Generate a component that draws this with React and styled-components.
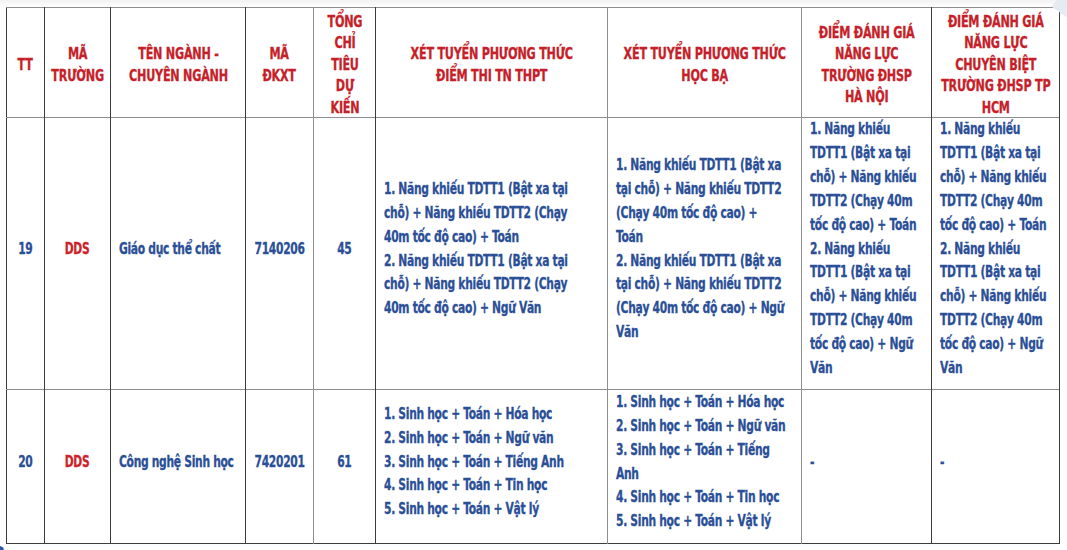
import styled, { createGlobalStyle } from "styled-components";

const GlobalStyle = createGlobalStyle`
  html, body {
    margin: 0;
    padding: 0;
    background: #ffffff;
  }
  body {
    font-family: "DejaVu Sans Condensed", "DejaVu Sans", "Liberation Sans", sans-serif;
  }
`;

const DARK = "#3c3c3c";
const GRAY = "#8e8e8e";

const columns = [
  { width: 38, line: DARK },
  { width: 66, line: DARK },
  { width: 135, line: DARK },
  { width: 68, line: GRAY },
  { width: 62, line: DARK },
  { width: 232, line: GRAY },
  { width: 194, line: GRAY },
  { width: 130, line: DARK },
  { width: 128, line: DARK },
];

const headers = [
  ["TT"],
  ["MÃ", "TRƯỜNG"],
  ["TÊN NGÀNH -", "CHUYÊN NGÀNH"],
  ["MÃ", "ĐKXT"],
  ["TỔNG", "CHỈ", "TIÊU", "DỰ", "KIẾN"],
  ["XÉT TUYỂN PHƯƠNG THỨC", "ĐIỂM THI TN THPT"],
  ["XÉT TUYỂN PHƯƠNG THỨC", "HỌC BẠ"],
  ["ĐIỂM ĐÁNH GIÁ", "NĂNG LỰC", "TRƯỜNG ĐHSP", "HÀ NỘI"],
  ["ĐIỂM ĐÁNH GIÁ", "NĂNG LỰC", "CHUYÊN BIỆT", "TRƯỜNG ĐHSP TP", "HCM"],
];

const talent = (last) => [
  "1. Năng khiếu",
  "TDTT1 (Bật xa tại",
  "chỗ) + Năng khiếu",
  "TDTT2 (Chạy 40m",
  "tốc độ cao) + Toán",
  "2. Năng khiếu",
  "TDTT1 (Bật xa tại",
  "chỗ) + Năng khiếu",
  "TDTT2 (Chạy 40m",
  "tốc độ cao) + " + last,
  "Văn",
];

const rows = [
  {
    height: 272,
    tt: "19",
    school: "DDS",
    name: "Giáo dục thể chất",
    code: "7140206",
    quota: "45",
    thpt: [
      "1. Năng khiếu TDTT1 (Bật xa tại",
      "chỗ) + Năng khiếu TDTT2 (Chạy",
      "40m tốc độ cao) + Toán",
      "2. Năng khiếu TDTT1 (Bật xa tại",
      "chỗ) + Năng khiếu TDTT2 (Chạy",
      "40m tốc độ cao) + Ngữ Văn",
    ],
    hocba: [
      "1. Năng khiếu TDTT1 (Bật xa",
      "tại chỗ) + Năng khiếu TDTT2",
      "(Chạy 40m tốc độ cao) +",
      "Toán",
      "2. Năng khiếu TDTT1 (Bật xa",
      "tại chỗ) + Năng khiếu TDTT2",
      "(Chạy 40m tốc độ cao) + Ngữ",
      "Văn",
    ],
    hanoi: talent("Ngữ"),
    hcm: talent("Ngữ"),
  },
  {
    height: 154,
    tt: "20",
    school: "DDS",
    name: "Công nghệ Sinh học",
    code: "7420201",
    quota: "61",
    thpt: [
      "1. Sinh học + Toán + Hóa học",
      "2. Sinh học + Toán + Ngữ văn",
      "3. Sinh học + Toán + Tiếng Anh",
      "4. Sinh học + Toán + Tin học",
      "5. Sinh học + Toán + Vật lý",
    ],
    hocba: [
      "1. Sinh học + Toán + Hóa học",
      "2. Sinh học + Toán + Ngữ văn",
      "3. Sinh học + Toán + Tiếng",
      "Anh",
      "4. Sinh học + Toán + Tin học",
      "5. Sinh học + Toán + Vật lý",
    ],
    hanoi: ["-"],
    hcm: ["-"],
  },
];

const Page = styled.div`
  position: relative;
  width: 1067px;
  height: 550px;
  padding: 7px 0 0 6px;
  box-sizing: border-box;
  overflow: hidden;
  background: linear-gradient(#f2f2f2 0, #ffffff 7px);
`;

const Table = styled.table`
  border-collapse: collapse;
  table-layout: fixed;
  width: 1053px;
  background: #ffffff;
  border: 1.5px solid ${DARK};
  border-top-color: ${GRAY};
`;

const HeadRow = styled.tr`
  height: 110px;
  border-bottom: 1.5px solid ${GRAY};
`;

const BodyRow = styled.tr`
  height: ${(p) => p.$height}px;
  border-bottom: 1.5px solid ${(p) => (p.$last ? DARK : GRAY)};
`;

const HeadCell = styled.th`
  padding: 0 4px;
  border-right: 1.5px solid ${(p) => p.$line};
  color: #c61f2a;
  font-size: 15px;
  font-weight: 700;
  line-height: 21.5px;
  letter-spacing: -0.3px;
  -webkit-text-stroke: 0.3px currentColor;
  vertical-align: middle;
  white-space: nowrap;
`;

const Cell = styled.td`
  padding: 0 2px 8px ${(p) => (p.$left ? "8px" : "2px")};
  border-right: 1.5px solid ${(p) => p.$line};
  color: ${(p) => (p.$red ? "#cf2129" : "#2b4f97")};
  font-size: 15.5px;
  font-weight: 700;
  line-height: 23.9px;
  letter-spacing: -0.4px;
  -webkit-text-stroke: 0.3px currentColor;
  vertical-align: middle;
  white-space: nowrap;
`;

/* condensed look: the reference face is far narrower than any installed one */
const Squeeze = styled.div`
  display: flex;
  justify-content: ${(p) => (p.$left ? "flex-start" : "center")};
  text-align: ${(p) => (p.$left ? "left" : "center")};

  & > span {
    display: block;
    flex: none;
    transform: translateY(${(p) => p.$shift || 0}px) scaleX(${(p) => p.$scale});
    transform-origin: ${(p) => (p.$left ? "left" : "center")} center;
  }
`;

const CornerDot = styled.div`
  position: absolute;
  left: -5px;
  bottom: -5px;
  width: 9px;
  height: 9px;
  border-radius: 50%;
  background: #2d5aa8;
`;

const CornerFold = styled.div`
  position: absolute;
  right: -8px;
  top: -10px;
  width: 18px;
  height: 24px;
  transform: rotate(35deg);
  background: #e6ebf2;
`;

const Lines = ({ lines, left, scale, shift }) => (
  <Squeeze $left={left} $scale={scale} $shift={shift}>
    <span>
      {lines.map((l, i) => (
        <span key={i}>
          {l}
          {i < lines.length - 1 && <br />}
        </span>
      ))}
    </span>
  </Squeeze>
);

const BODY = 0.77;
const HEAD = 0.83;

export default function App() {
  return (
    <>
      <GlobalStyle />
      <Page>
        <CornerFold />
        <Table>
          <colgroup>
            {columns.map((c, i) => (
              <col key={i} style={{ width: c.width }} />
            ))}
          </colgroup>
          <thead>
            <HeadRow>
              {headers.map((h, i) => (
                <HeadCell key={i} $line={columns[i].line}>
                  <Lines lines={h} scale={HEAD} shift={3} />
                </HeadCell>
              ))}
            </HeadRow>
          </thead>
          <tbody>
            {rows.map((r, idx) => (
              <BodyRow key={r.tt} $height={r.height} $last={idx === rows.length - 1}>
                <Cell $line={columns[0].line}>
                  <Lines lines={[r.tt]} scale={BODY} />
                </Cell>
                <Cell $line={columns[1].line} $red>
                  <Lines lines={[r.school]} scale={BODY} />
                </Cell>
                <Cell $line={columns[2].line} $left>
                  <Lines lines={[r.name]} scale={BODY} left />
                </Cell>
                <Cell $line={columns[3].line}>
                  <Lines lines={[r.code]} scale={BODY} />
                </Cell>
                <Cell $line={columns[4].line}>
                  <Lines lines={[r.quota]} scale={BODY} />
                </Cell>
                <Cell $line={columns[5].line} $left>
                  <Lines lines={r.thpt} scale={BODY} left />
                </Cell>
                <Cell $line={columns[6].line} $left>
                  <Lines lines={r.hocba} scale={BODY} left />
                </Cell>
                <Cell $line={columns[7].line} $left>
                  <Lines lines={r.hanoi} scale={BODY} left />
                </Cell>
                <Cell $line={columns[8].line} $left>
                  <Lines lines={r.hcm} scale={BODY} left />
                </Cell>
              </BodyRow>
            ))}
          </tbody>
        </Table>
        <CornerDot />
      </Page>
    </>
  );
}
